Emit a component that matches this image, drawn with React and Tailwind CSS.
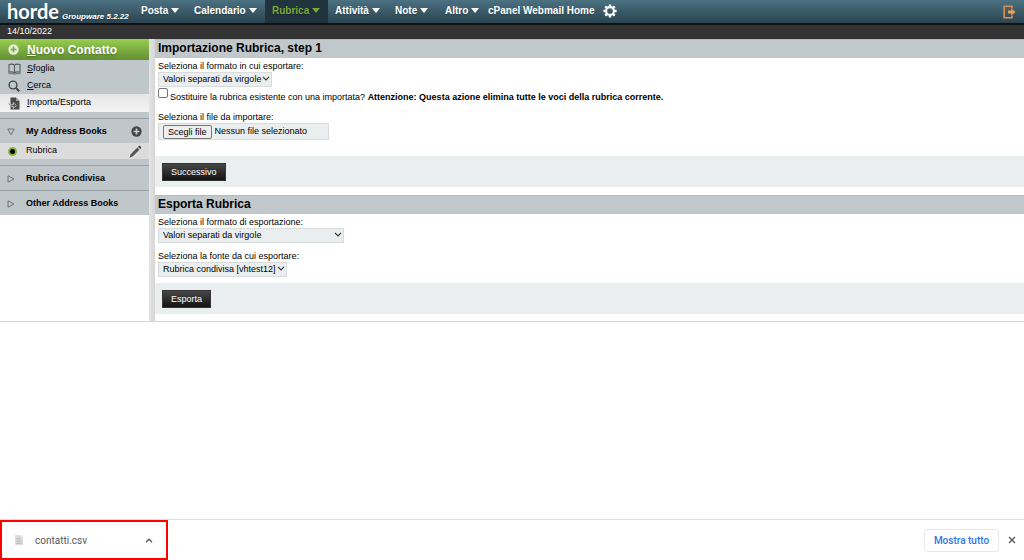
import React, { useRef, useState } from 'react';

const menu = [
    { label: 'Posta', width: 'w-[53px]' },
    { label: 'Calendario', width: 'w-[78px]' },
    { label: 'Rubrica', width: 'w-[63px]', active: true },
    { label: 'Attività', width: 'w-[60px]' },
    { label: 'Note', width: 'w-[50px]' },
    { label: 'Altro', width: 'w-[50px]' },
];

const BookIcon = () => (
    <svg viewBox="0 0 13 12" className="w-[13px] h-3" fill="none" stroke="#555d60" strokeWidth="1.1">
        <path d="M6.5 2.2C5.3 1 3 .9 1 1.5v7.7c2-.5 4.3-.4 5.5.8 1.2-1.2 3.5-1.3 5.5-.8V1.5C10 .9 7.7 1 6.5 2.2Zm0 0V10" />
        <path d="M.5 10.7h4.7l1.3.8 1.3-.8h4.7" strokeWidth=".8" />
    </svg>
);

const SearchIcon = () => (
    <svg viewBox="0 0 12 12" className="w-3 h-3" fill="none" stroke="#444">
        <circle cx="5" cy="5" r="3.9" strokeWidth="1.4" />
        <path d="m7.8 7.8 3.4 3.4" strokeWidth="2" />
    </svg>
);

const ImportIcon = () => (
    <svg viewBox="0 0 12 13" className="w-3 h-[13px]">
        <path d="M2.5.5H8L11.5 4v8.5h-9Z" fill="#4a4a4a" />
        <path d="M8 .5V4h3.5Z" fill="#9a9a9a" />
        <path d="M.8 4.6C1 7 2.2 7.8 5.2 7.8V5.6L8.4 8.6 5.2 11.4V9.4C1.8 9.4 0 7.6.8 4.6Z" fill="#4a4a4a" stroke="#eee" strokeWidth=".7" />
    </svg>
);

const PlusCircle = ({ className, disc, cross }) => (
    <svg viewBox="0 0 12 12" className={className}>
        <circle cx="6" cy="6" r="5.6" fill={disc} />
        <path d="M6 2.8v6.4M2.8 6h6.4" stroke={cross} strokeWidth="1.8" />
    </svg>
);

const PencilIcon = () => (
    <svg viewBox="0 0 13 13" className="w-[13px] h-[13px]">
        <path d="M.6 12.4 1.5 9.4l6.8-6.8 2.1 2.1-6.8 6.8Z" fill="#555" />
        <path d="M9 1.9 10.1.8c.6-.6 2.7 1.5 2.1 2.1L11.1 4Z" fill="#444" />
    </svg>
);

const GearIcon = () => (
    <svg viewBox="0 0 14 14" className="w-[14px] h-[14px]" fill="none" stroke="#fff">
        <circle cx="7" cy="7" r="3.9" strokeWidth="2.1" />
        <path
            d="M7 .4v2.2M7 11.4v2.2M.4 7h2.2M11.4 7h2.2M2.3 2.3l1.6 1.6M10.1 10.1l1.6 1.6M2.3 11.7l1.6-1.6M10.1 3.9l1.6-1.6"
            strokeWidth="2.4"
        />
    </svg>
);

const LogoutIcon = () => (
    <svg viewBox="0 0 13 14" className="w-[13px] h-[14px]">
        <path d="M9 3.5V1.2H1.2v11.6H9v-2.3" fill="none" stroke="#d99050" strokeWidth="1.6" />
        <path d="M5 5.6h3.2V3.4L12.6 7l-4.4 3.6V8.4H5Z" fill="#f49a4c" />
    </svg>
);

const Triangle = ({ open }) => (
    <svg viewBox="0 0 8 8" className="w-2 h-2" fill="none" stroke="#6d7577" strokeWidth="1">
        <path d={open ? 'M.8 1h6.4L4 6.8Z' : 'M1 .8v6.4L7 4Z'} />
    </svg>
);

const SideLink = ({ icon, text, active }) => (
    <li>
        <a href="#" className={`flex items-center pl-2 text-[9px] ${active ? 'h-[18px] bg-linear-to-b from-[#e6e6e6] to-[#f4f4f4]' : 'h-[17px]'}`}>
            <span className="w-[19px]">{icon}</span>
            <span><u>{text[0]}</u>{text.slice(1)}</span>
        </a>
    </li>
);

const BookHeader = ({ label, open, children }) => (
    <div className="flex items-center h-[25px] px-[7px] pt-px border-t border-[#98a1a4] text-[9px] font-bold">
        <button type="button" aria-expanded={!!open} className="flex items-center flex-1">
            <span className="w-[19px]"><Triangle open={open} /></span>
            {label}
        </button>
        {children}
    </div>
);

const Select = ({ id, options, className }) => (
    <div className={`relative ${className}`}>
        <select id={id} className="block w-full h-[15px] pl-1 appearance-none bg-[#eaeeee] border border-[#d8dcdd] text-[9px] leading-[13px]">
            {options.map(option => <option key={option}>{option}</option>)}
        </select>
        <svg viewBox="0 0 8 5" className="absolute right-[2px] top-[4px] w-[8px] h-[5px] pointer-events-none" fill="none" stroke="#333" strokeWidth="1.2">
            <path d="m1 .8 3 3 3-3" />
        </svg>
    </div>
);

const Heading = ({ children }) => (
    <h1 className="h-[19px] pl-[3px] bg-[#c0c8cb] border-t border-[#b4bcbe] text-[12px] leading-[17px] font-bold">{children}</h1>
);

const FormFooter = ({ children }) => (
    <div className="flex items-center h-[31px] pl-[7px] bg-[#eaeeee]">
        <button type="submit" className="h-[18px] px-2 bg-linear-to-b from-[#484848] to-[#141414] border border-[#333] text-white text-[9px] leading-[14px]">
            {children}
        </button>
    </div>
);

const TopBar = () => (
    <header>
        <div className="flex items-stretch h-[25px] pl-[7px] pr-2 bg-linear-to-b from-[#4b7182] to-[#2c4450] border-b-2 border-[#111] text-white">
            <a href="#" className="flex items-end w-[127px] gap-[3px] text-shadow-sm">
                <span className="font-[Lato,sans-serif] font-bold text-[20px] leading-[23px]">horde</span>
                <span className="text-[8px] leading-[13px] font-bold italic whitespace-nowrap">Groupware 5.2.22</span>
            </a>
            <nav className="flex items-stretch text-[10px] font-bold">
                {menu.map(({ label, width, active }) => (
                    <a
                        key={label}
                        href="#"
                        className={`flex items-center gap-[3px] pl-[7px] pb-[2px] text-shadow-sm ${width} ${active ? 'bg-[#20343e] text-[#7ba53c]' : ''}`}
                    >
                        {label}
                        <svg viewBox="0 0 8 5" className="w-2 h-[5px]"><path d="M0 0h8L4 5Z" fill="currentColor" /></svg>
                    </a>
                ))}
            </nav>
            <a href="#" className="flex items-center pb-[2px] text-[10px] font-bold text-shadow-sm">cPanel Webmail Home</a>
            <button type="button" aria-label="Impostazioni" className="ml-2 pb-px"><GearIcon /></button>
            <button type="button" aria-label="Esci" className="ml-auto"><LogoutIcon /></button>
        </div>
        <div className="h-[14px] pl-[7px] bg-[#333] text-white text-[9px] leading-[13px]">14/10/2022</div>
    </header>
);

const Sidebar = () => (
    <aside className="w-[149px] shrink-0">
        <div className="bg-[#bfc7ca]">
            <a href="#" className="flex items-center h-[21px] pl-2 bg-linear-to-b from-[#97cf4e] to-[#648f35] text-white text-[12px] font-bold text-shadow-md">
                <span className="w-[19px]"><PlusCircle className="w-[11px] h-[11px]" disc="#e6f1d8" cross="#79a844" /></span>
                <span><u>N</u>uovo Contatto</span>
            </a>
            <ul className="pb-[6px]">
                <SideLink icon={<BookIcon />} text="Sfoglia" />
                <SideLink icon={<SearchIcon />} text="Cerca" />
                <SideLink icon={<ImportIcon />} text="Importa/Esporta" active />
            </ul>
            <BookHeader label="My Address Books" open>
                <button type="button" aria-label="Nuova rubrica">
                    <PlusCircle className="w-[11px] h-[11px]" disc="#444" cross="#c5cccf" />
                </button>
            </BookHeader>
            <div className="flex items-center h-4 mb-[6px] pl-2 pr-[7px] bg-[#dcdcdc] text-[9px]">
                <a href="#" className="flex items-center flex-1">
                    <span className="w-[18px]">
                        <span className="block w-[9px] h-[9px] rounded-full bg-black border-2 border-[#83b541]"></span>
                    </span>
                    Rubrica
                </a>
                <button type="button" aria-label="Modifica rubrica"><PencilIcon /></button>
            </div>
            <BookHeader label="Rubrica Condivisa" />
            <BookHeader label="Other Address Books" />
        </div>
    </aside>
);

const ImportForm = () => {
    const fileInput = useRef(null);
    const [fileName, setFileName] = useState('Nessun file selezionato');

    return (
        <form onSubmit={e => e.preventDefault()}>
            <Heading>Importazione Rubrica, step 1</Heading>
            <div className="px-[3px] pt-[3px] pb-4">
                <label htmlFor="import-format" className="block leading-[11px]">Seleziona il formato in cui esportare:</label>
                <Select id="import-format" className="w-[114px]" options={['Valori separati da virgole', 'Valori separati da tabulazioni', 'vCard']} />
                <div className="flex items-start h-[25px] gap-[2px] pt-px">
                    <input id="purge" type="checkbox" className="w-[10px] h-[10px] appearance-none bg-white border border-[#777] rounded-[2px] checked:bg-blue-600" />
                    <label htmlFor="purge" className="pt-[3px] leading-[12px]">
                        Sostituire la rubrica esistente con una importata?{' '}
                        <strong>Attenzione: Questa azione elimina tutte le voci della rubrica corrente.</strong>
                    </label>
                </div>
                <label htmlFor="import-file" className="block leading-[11px]">Seleziona il file da importare:</label>
                <div className="flex items-center w-[171px] h-[17px] pl-1 gap-[3px] bg-[#eaeeee] border border-[#d8dcdd]">
                    <input
                        ref={fileInput}
                        id="import-file"
                        type="file"
                        className="hidden"
                        onChange={e => setFileName(e.target.files[0]?.name || 'Nessun file selezionato')}
                    />
                    <button
                        type="button"
                        className="h-[14px] px-1 bg-[#efefef] border border-[#767676] rounded-[2px] leading-[12px]"
                        onClick={() => fileInput.current.click()}
                    >
                        Scegli file
                    </button>
                    <span className="truncate">{fileName}</span>
                </div>
            </div>
            <FormFooter>Successivo</FormFooter>
        </form>
    );
};

const ExportForm = () => (
    <form className="mt-2" onSubmit={e => e.preventDefault()}>
        <Heading>Esporta Rubrica</Heading>
        <div className="px-[3px] pt-[3px] pb-[6px]">
            <label htmlFor="export-format" className="block leading-[11px]">Seleziona il formato di esportazione:</label>
            <Select id="export-format" className="w-[186px]" options={['Valori separati da virgole', 'vCard', 'LDIF Address Book']} />
            <label htmlFor="export-source" className="block pt-2 leading-[11px]">Seleziona la fonte da cui esportare:</label>
            <Select id="export-source" className="w-[129px]" options={['Rubrica condivisa [vhtest12]', 'Rubrica']} />
        </div>
        <FormFooter>Esporta</FormFooter>
    </form>
);

const DownloadBar = () => (
    <footer className="flex items-center mt-auto h-[41px] pr-2 bg-white border-t border-[#dcdee0] font-[Roboto,sans-serif] text-[10px]">
        <button type="button" className="flex items-center w-[168px] h-[40px] px-[13px] border-2 border-[#ff0000] text-[#55595e]">
            <svg viewBox="0 0 8 10" className="w-2 h-[10px]">
                <path d="M0 0h5.5L8 2.5V10H0Z" fill="#dcdcdc" />
                <path d="M1.5 3.5h4M1.5 5.2h5M1.5 6.8h5M1.5 8.3h5" stroke="#b5b5b5" strokeWidth=".7" />
            </svg>
            <span className="flex-1 pl-3 text-left">contatti.csv</span>
            <svg viewBox="0 0 8 5" className="w-2 h-[5px]" fill="none" stroke="#55595e" strokeWidth="1.4"><path d="m1 4.2 3-3 3 3" /></svg>
        </button>
        <button type="button" className="ml-auto w-[75px] h-[23px] border border-[#e6e8ea] rounded-[3px] text-[#2f74e5] font-medium">Mostra tutto</button>
        <button type="button" aria-label="Chiudi" className="ml-[9px]">
            <svg viewBox="0 0 8 8" className="w-2 h-2" fill="none" stroke="#55595e" strokeWidth="1.4"><path d="m1 1 6 6M7 1 1 7" /></svg>
        </button>
    </footer>
);

export default function App() {
    return (
        <div className="flex flex-col min-h-screen bg-white text-black font-['Liberation_Sans',Arial,sans-serif] text-[9px]">
            <TopBar />
            <div className="flex border-b border-[#d4d4d4]">
                <Sidebar />
                <div className="w-[6px] shrink-0 bg-linear-to-r from-[#e4e4e4] to-[#d6d6d6]"></div>
                <main className="flex-1 min-w-0 pb-[7px]">
                    <ImportForm />
                    <ExportForm />
                </main>
            </div>
            <DownloadBar />
        </div>
    );
}
